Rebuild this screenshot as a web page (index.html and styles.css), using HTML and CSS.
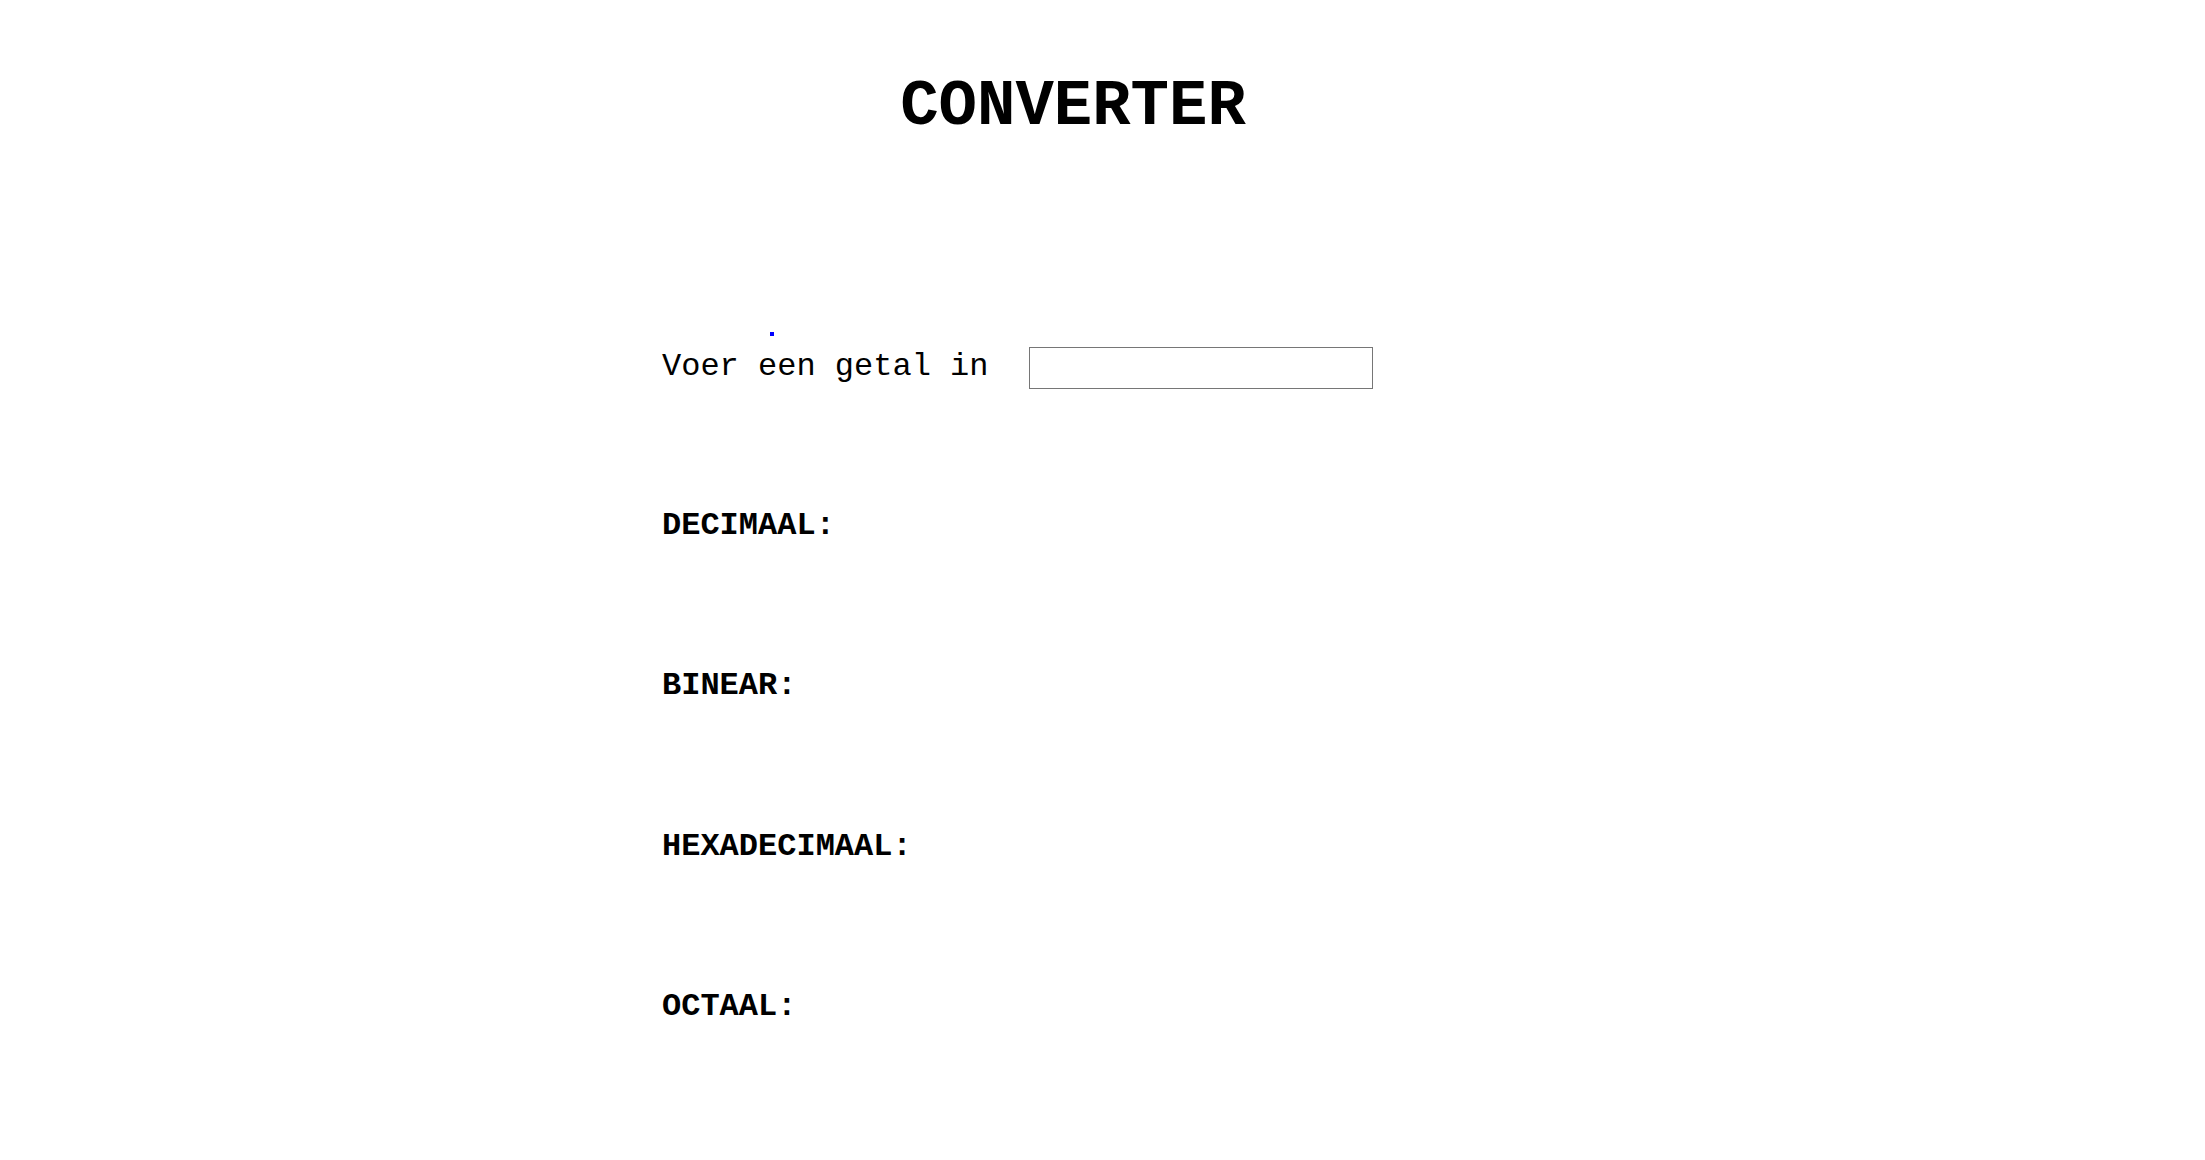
FILE: index.html
```html
<!DOCTYPE html>
<html lang="nl">
<head>
<meta charset="utf-8">
<title>Converter</title>
<link rel="stylesheet" href="styles.css">
</head>
<body>
<main class="page">
  <h1 class="title">CONVERTER</h1>
  <section class="rows">
    <div class="row input-row">
      <span class="dot"></span>
      <label class="prompt" for="getal">Voer een getal in</label>
      <input class="field" id="getal" type="text">
    </div>
    <div class="row"><span class="label">DECIMAAL:</span></div>
    <div class="row"><span class="label">BINEAR:</span></div>
    <div class="row"><span class="label">HEXADECIMAAL:</span></div>
    <div class="row"><span class="label">OCTAAL:</span></div>
  </section>
</main>
</body>
</html>
```

FILE: styles.css
```css
html, body {
  margin: 0;
  padding: 0;
  background: #ffffff;
}

body {
  font-family: "Courier New", "Liberation Mono", monospace;
  color: #000000;
}

.page {
  padding-top: 71px;
  padding-left: 662px;
  width: 822px;
}

.title {
  margin: 0;
  font-size: 64px;
  line-height: 72px;
  font-weight: bold;
  text-align: center;
}

.rows {
  margin-top: 204px;
  display: grid;
  grid-auto-rows: 160.5px;
}

.row {
  display: flex;
  align-items: flex-start;
  font-size: 32px;
  line-height: 36px;
}

.input-row {
  position: relative;
}

.dot {
  position: absolute;
  left: 108px;
  top: -15px;
  width: 4px;
  height: 4px;
  background: #0000ff;
}

.prompt {
  font-weight: normal;
  margin-top: 2px;
  margin-right: 41px;
  white-space: pre;
}

.field {
  box-sizing: border-box;
  width: 344px;
  height: 42px;
  margin: 0;
  padding: 2px 6px;
  border: 1px solid #767676;
  border-radius: 0;
  background: #ffffff;
  font-family: inherit;
  font-size: 20px;
}

.label {
  font-weight: bold;
}
```
